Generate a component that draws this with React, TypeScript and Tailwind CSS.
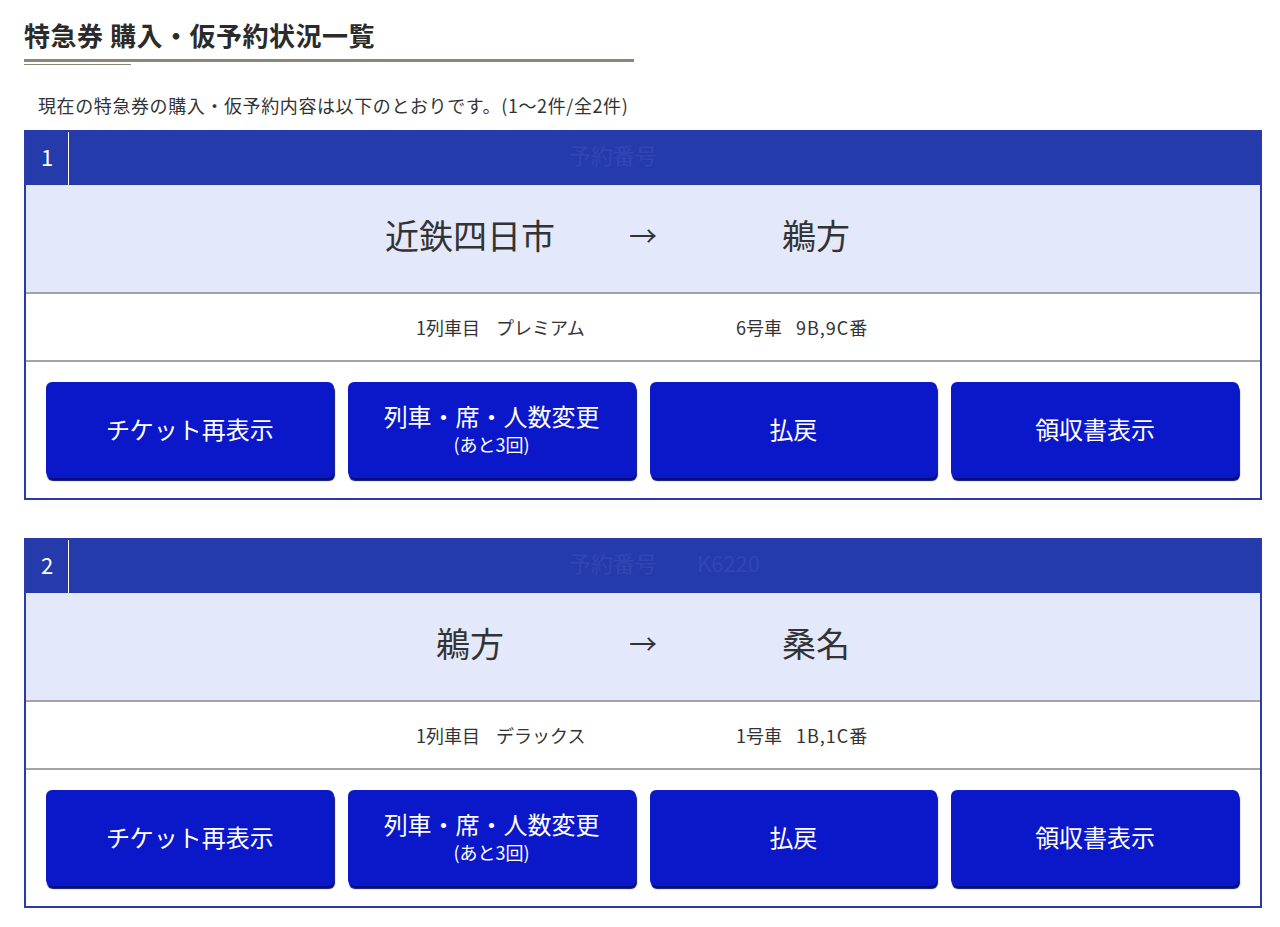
import React from "react";

type Reservation = {
  no: number;
  reserveNo: string;
  showNo: boolean;
  from: string;
  to: string;
  train: string;
  seatClass: string;
  car: string;
  seats: string;
};

const reservations: Reservation[] = [
  {
    no: 1,
    reserveNo: "K6220",
    showNo: false,
    from: "近鉄四日市",
    to: "鵜方",
    train: "1列車目",
    seatClass: "プレミアム",
    car: "6号車",
    seats: "9B,9C番",
  },
  {
    no: 2,
    reserveNo: "K6220",
    showNo: true,
    from: "鵜方",
    to: "桑名",
    train: "1列車目",
    seatClass: "デラックス",
    car: "1号車",
    seats: "1B,1C番",
  },
];

function ActionButton({ label, sub }: { label: string; sub?: string }) {
  return (
    <button className="flex h-[96px] flex-col items-center justify-center rounded-[6px] bg-[#0b18c9] pb-[3px] text-white shadow-[1px_3px_1px_#060f78]">
      <span className="text-[24px] leading-[30px]">{label}</span>
      {sub && <span className="text-[18px] leading-[26px]">{sub}</span>}
    </button>
  );
}

function ReservationCard({ r }: { r: Reservation }) {
  return (
    <div className="border-2 border-[#2a3aa8] bg-white">
      {/* header */}
      <div className="flex h-[53px] bg-[#263bab]">
        <div className="flex w-[43px] items-center justify-center border-r border-white pb-[5px] text-[22px] text-white">
          {r.no}
        </div>
        <div className="flex flex-1 items-center justify-center pb-[8px] text-[22px] text-[#3146b4]">
          予約番号
          <span className={r.showNo ? "ml-[40px]" : "ml-[40px] text-transparent"}>{r.reserveNo}</span>
        </div>
      </div>

      {/* route */}
      <div className="flex h-[109px] items-center justify-center border-b-2 border-[#a3a3a8] bg-[#e3e9fb] pb-[8px] text-[34px] text-[#333]">
        <div className="w-[173px] text-center">{r.from}</div>
        <div className="w-[173px] text-center text-[28px]">→</div>
        <div className="w-[173px] text-center">{r.to}</div>
      </div>

      {/* train info */}
      <div className="flex h-[68px] items-center border-b-2 border-[#a3a3a8] pl-[390px] text-[18px] text-[#333]">
        <div className="w-[320px]">
          {r.train}
          <span className="ml-[16px]">{r.seatClass}</span>
        </div>
        <div>
          {r.car}
          <span className="ml-[14px] tracking-[1px]">{r.seats}</span>
        </div>
      </div>

      {/* actions */}
      <div className="grid grid-cols-4 gap-[14px] pb-[20px] pl-[20px] pr-[21px] pt-[20px]">
        <ActionButton label="チケット再表示" />
        <ActionButton label="列車・席・人数変更" sub="(あと3回)" />
        <ActionButton label="払戻" />
        <ActionButton label="領収書表示" />
      </div>
    </div>
  );
}

export default function App() {
  return (
    <div
      className="min-h-[927px] bg-white pl-[24px] pr-[18px] text-[#333]"
      style={{ fontFamily: '"Noto Sans CJK JP", "Noto Sans", sans-serif' }}
    >
      <h1 className="pt-[20px] text-[26px] font-bold leading-[30px] tracking-[0.5px] text-[#2b2b2b]">
        特急券 購入・仮予約状況一覧
      </h1>
      <div className="mt-[9px] h-[3px] w-[610px] bg-[#8c8879]" />
      <div className="mt-[2px] h-[1px] w-[107px] bg-[#8c8879]" />

      <p className="mt-[27px] pl-[14px] text-[18px] leading-[26px] tracking-[0.6px] text-[#333]">
        現在の特急券の購入・仮予約内容は以下のとおりです。(1〜2件/全2件)
      </p>

      <div className="mt-[12px] flex flex-col gap-[38px] pb-[20px]">
        {reservations.map((r) => (
          <ReservationCard key={r.no} r={r} />
        ))}
      </div>
    </div>
  );
}
